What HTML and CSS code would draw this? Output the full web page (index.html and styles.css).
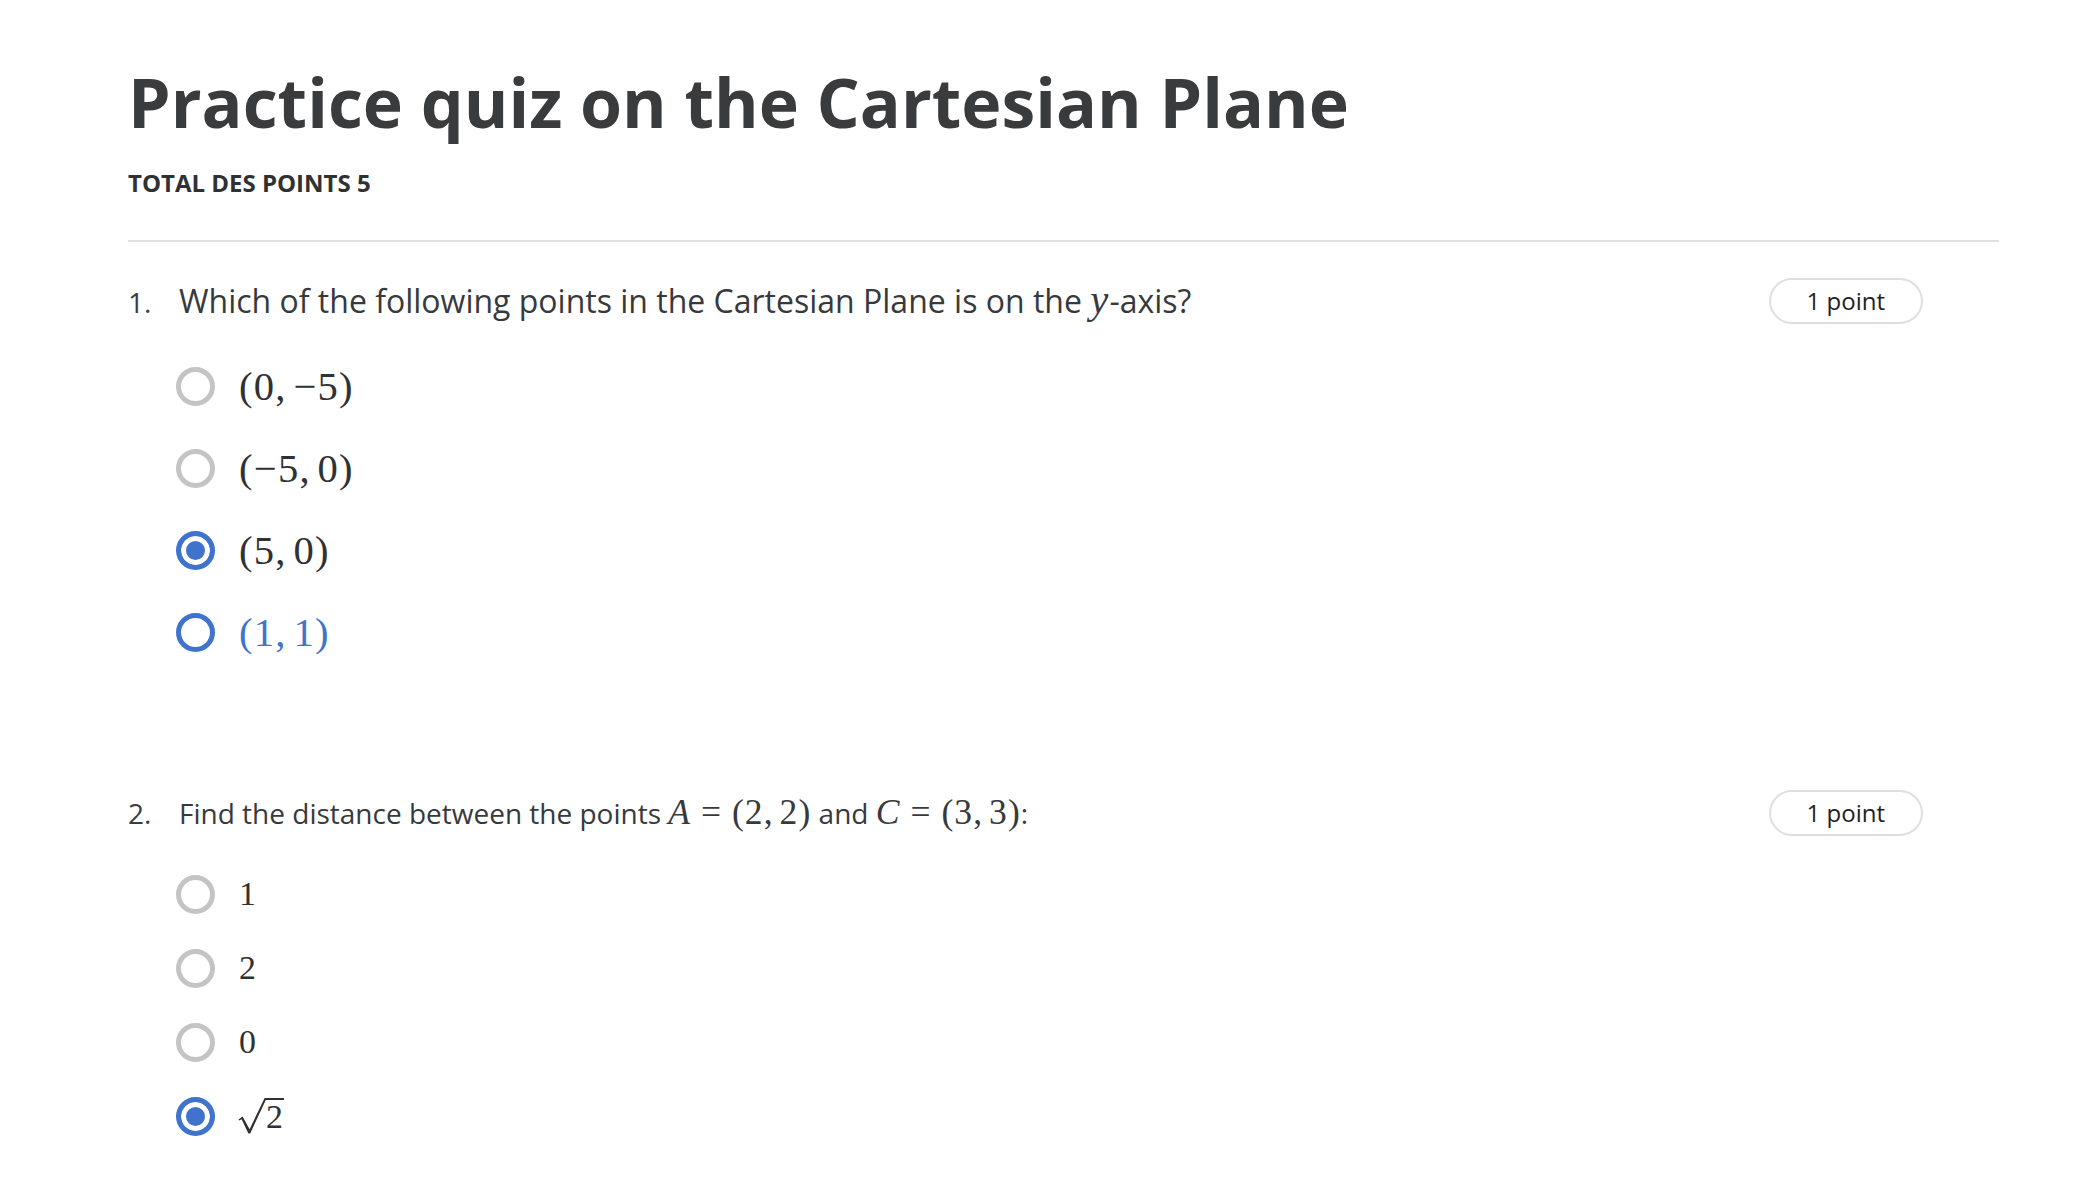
FILE: index.html
```html
<!DOCTYPE html>
<html lang="en">
<head>
<meta charset="utf-8">
<title>Practice quiz on the Cartesian Plane</title>
<link rel="stylesheet" href="styles.css">
</head>
<body>
<main class="quiz">
  <header class="quiz-head">
    <h1 class="title">Practice quiz on the Cartesian Plane</h1>
    <div class="total">TOTAL DES POINTS 5</div>
  </header>

  <section class="question q1">
    <div class="q-head">
      <div class="q-line">
        <span class="q-num">1.</span>
        <p class="q-text">Which of the following points in the Cartesian Plane is on the <span class="math"><i>y</i></span>-axis?</p>
      </div>
      <span class="pill">1 point</span>
    </div>
    <div class="options">
      <div class="option"><span class="radio"></span><span class="math">(0,<span class="thin"></span>−5)</span></div>
      <div class="option"><span class="radio"></span><span class="math">(−5,<span class="thin"></span>0)</span></div>
      <div class="option"><span class="radio checked"></span><span class="math">(5,<span class="thin"></span>0)</span></div>
      <div class="option hover"><span class="radio"></span><span class="math">(1,<span class="thin"></span>1)</span></div>
    </div>
  </section>

  <section class="question q2">
    <div class="q-head">
      <div class="q-line">
        <span class="q-num">2.</span>
        <p class="q-text">Find the distance between the points <span class="math"><i>A</i><span class="rel">=</span>(2,<span class="thin"></span>2)</span> and <span class="math"><i>C</i><span class="rel">=</span>(3,<span class="thin"></span>3)</span>:</p>
      </div>
      <span class="pill">1 point</span>
    </div>
    <div class="options">
      <div class="option"><span class="radio"></span><span class="math">1</span></div>
      <div class="option"><span class="radio"></span><span class="math">2</span></div>
      <div class="option"><span class="radio"></span><span class="math">0</span></div>
      <div class="option"><span class="radio checked"></span><span class="math sqrt"><svg class="radical" width="28" height="36" viewBox="0 0 28 36" aria-hidden="true"><path d="M0.5 21.6 L4.6 18.6 L11.6 31.2 L26.6 0 H28 V2 H27.8 L12.2 35.4 H10.4 L3.6 21.2 L1.2 22.6 Z" fill="currentColor"/></svg><span class="radicand">2</span></span></div>
    </div>
  </section>
</main>
</body>
</html>
```

FILE: styles.css
```css
html, body {
  margin: 0;
  padding: 0;
  background: #ffffff;
}

body {
  font-family: "Open Sans", "Liberation Sans", sans-serif;
  color: #373a3c;
}

.quiz {
  padding: 62px 95px 80px 128px;
}

.quiz-head {
  padding-bottom: 42px;
  border-bottom: 2px solid #e1e1e1;
}

.title {
  margin: 0;
  font-size: 68px;
  font-weight: 700;
  line-height: 80px;
  color: #3a3b3d;
}

.total {
  margin-top: 26px;
  font-size: 24px;
  font-weight: 700;
  line-height: 30px;
  color: #2f3133;
}

.question {
  padding-right: 76px;
}

.q1 {
  margin-top: 36px;
}

.q2 {
  margin-top: 133px;
}

.q-head {
  display: flex;
  align-items: center;
  justify-content: space-between;
  min-height: 46px;
}

.q-line {
  display: flex;
  align-items: baseline;
}

.q-num {
  width: 51px;
  flex: none;
  font-size: 28px;
  color: #3b3d3f;
}

.q-text {
  margin: 0;
  font-size: 32px;
  line-height: 46px;
  color: #373a3c;
}

.q-text .math {
  line-height: 0;
}

.q2 .q-text {
  font-size: 28px;
}

.pill {
  flex: none;
  box-sizing: border-box;
  height: 46px;
  padding: 0 36px;
  border: 2px solid #dfdfdf;
  border-radius: 23px;
  font-size: 24px;
  line-height: 42px;
  color: #1f1f1f;
}

.math {
  font-family: "Liberation Serif", "Times New Roman", serif;
  font-size: 1.27em;
  letter-spacing: 0.03em;
  white-space: nowrap;
}

.math i {
  font-style: italic;
}

.thin {
  display: inline-block;
  width: 0.167em;
}

.rel {
  margin: 0 0.278em;
}

.options {
  margin-top: 37px;
  padding-left: 48px;
  display: flex;
  flex-direction: column;
  gap: 32px;
}

.option {
  display: flex;
  align-items: center;
  gap: 24px;
  height: 50px;
  color: #2f3133;
}

.q1 .option {
  font-size: 32px;
}

.q2 .option {
  height: 42px;
  font-size: 28px;
}

.q2 .option .math {
  font-size: 1.21em;
}

.option.hover {
  color: #3f73cd;
}

.radio {
  flex: none;
  box-sizing: border-box;
  width: 39px;
  height: 39px;
  border: 5px solid #c4c4c4;
  border-radius: 50%;
  background: #ffffff;
}

.option.hover .radio {
  border-color: #3f73cd;
}

.radio.checked {
  border-color: #3f73cd;
  background: #3f73cd;
  box-shadow: inset 0 0 0 5px #ffffff;
}

.sqrt {
  display: inline-flex;
  align-items: flex-start;
  height: 36px;
  margin-left: -1px;
}

.radical {
  display: block;
  flex: none;
}

.radicand {
  display: block;
  box-sizing: border-box;
  height: 36px;
  border-top: 2px solid currentColor;
  line-height: 34px;
  padding: 0 1px 0 0;
  letter-spacing: 0;
}
```
